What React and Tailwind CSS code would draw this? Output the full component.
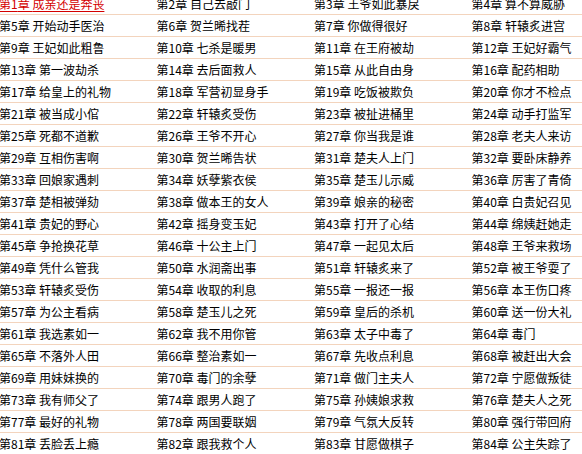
import React from "react";

const titles = [
  "成亲还是奔丧","自己去敲门","王爷如此暴戾","算不算威胁",
  "开始动手医治","贺兰晞找茬","你做得很好","轩辕炙进宫",
  "王妃如此粗鲁","七杀是暖男","在王府被劫","王妃好霸气",
  "第一波劫杀","去后面救人","从此自由身","配药相助",
  "给皇上的礼物","军营初显身手","吃饭被欺负","你才不检点",
  "被当成小倌","轩辕炙受伤","被扯进桶里","动手打监军",
  "死都不道歉","王爷不开心","你当我是谁","老夫人来访",
  "互相伤害啊","贺兰晞告状","楚夫人上门","要卧床静养",
  "回娘家遇刺","妖孽紫衣侯","楚玉儿示威","厉害了青倚",
  "楚相被弹劾","做本王的女人","娘亲的秘密","白贵妃召见",
  "贵妃的野心","摇身变玉妃","打开了心结","绵姨赶她走",
  "争抢换花草","十公主上门","一起见太后","王爷来救场",
  "凭什么管我","水润斋出事","轩辕炙来了","被王爷耍了",
  "轩辕炙受伤","收取的利息","一报还一报","本王伤口疼",
  "为公主看病","楚玉儿之死","皇后的杀机","送一份大礼",
  "我选素如一","我不用你管","太子中毒了","毒门",
  "不落外人田","整治素如一","先收点利息","被赶出大会",
  "用妹妹换的","毒门的余孽","做门主夫人","宁愿做叛徒",
  "我有师父了","跟男人跑了","孙姨娘求救","楚夫人之死",
  "最好的礼物","两国要联姻","气氛大反转","强行带回府",
  "丢脸丢上瘾","跟我救个人","甘愿做棋子","公主失踪了",
];

const rows = [];
for (let i = 0; i < titles.length; i += 4) rows.push(titles.slice(i, i + 4).map((t, j) => ({ n: i + j + 1, t })));

export default function App() {
  return (
    <div className="w-[582px] h-[454px] overflow-hidden bg-white">
      <div
        className="w-[630px] mt-[-7px] ml-[-1px] text-[12px] text-black"
        style={{ fontFamily: '"Noto Sans CJK SC", "Noto Sans", sans-serif' }}
      >
        {rows.map((r, ri) => (
          <div key={ri} className="grid grid-cols-4 h-[22px] border-b border-[#f3d4bd] items-center">
            {r.map((c) => (
              <div key={c.n} className="whitespace-nowrap leading-[21px]">
                {c.n === 1 ? (
                  <span className="text-[#d40000] underline underline-offset-[2px]">第{c.n}章 {c.t}</span>
                ) : (
                  <span>第{c.n}章 {c.t}</span>
                )}
              </div>
            ))}
          </div>
        ))}
      </div>
    </div>
  );
}
